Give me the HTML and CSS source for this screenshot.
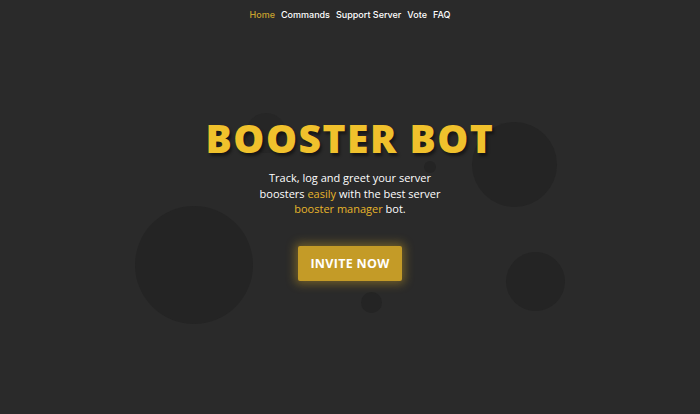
FILE: index.html
```html
<!DOCTYPE html>
<html lang="en">
<head>
<meta charset="utf-8">
<title>Booster Bot</title>
<link rel="stylesheet" href="styles.css">
</head>
<body>
<div class="page">
  <div class="bubbles" aria-hidden="true">
    <span class="bubble b1"></span>
    <span class="bubble b2"></span>
    <span class="bubble b3"></span>
    <span class="bubble b4"></span>
    <span class="bubble b5"></span>
    <span class="bubble b6"></span>
  </div>
  <nav class="nav">
    <a class="nav-link active" href="#">Home</a>
    <a class="nav-link" href="#">Commands</a>
    <a class="nav-link" href="#">Support Server</a>
    <a class="nav-link" href="#">Vote</a>
    <a class="nav-link" href="#">FAQ</a>
  </nav>
  <main class="hero">
    <h1 class="title">BOOSTER BOT</h1>
    <p class="tagline">Track, log and greet your server<br>boosters <span class="hl">easily</span> with the best server<br><span class="hl">booster manager</span> bot.</p>
    <a class="invite" href="#">INVITE NOW</a>
  </main>
</div>
</body>
</html>
```

FILE: styles.css
```css
html, body {
  margin: 0;
  padding: 0;
  background: #2a2a2a;
}
.page {
  position: relative;
  width: 700px;
  height: 414px;
  overflow: hidden;
  background: #2a2a2a;
  font-family: "Open Sans", "Liberation Sans", sans-serif;
}
.bubbles {
  position: absolute;
  inset: 0;
  z-index: 0;
}
.bubble {
  position: absolute;
  border-radius: 50%;
  background: #242424;
}
.b1 { left: 135px; top: 206px; width: 118px; height: 118px; }
.b2 { left: 472px; top: 122px; width: 85px; height: 85px; }
.b3 { left: 506px; top: 252px; width: 59px; height: 59px; }
.b4 { left: 361px; top: 292px; width: 21px; height: 21px; }
.b5 { left: 424px; top: 161px; width: 12px; height: 12px; }
.b6 { left: 246px; top: 113px; width: 40px; height: 40px; background: #262626; }

.nav {
  position: relative;
  z-index: 1;
  display: flex;
  justify-content: center;
  gap: 6px;
  padding-top: 9px;
  font-family: "Inter", "Liberation Sans", sans-serif;
  font-size: 9px;
  font-weight: 500;
}
.nav-link {
  color: #ffffff;
  text-decoration: none;
  line-height: 12px;
}
.nav-link.active {
  color: #c9a22e;
}
.hero {
  position: relative;
  z-index: 1;
  display: flex;
  flex-direction: column;
  align-items: center;
  padding-top: 97px;
}
.title {
  margin: 0;
  font-family: "Open Sans", "Liberation Sans", sans-serif;
  font-weight: 800;
  font-size: 39px;
  line-height: 40px;
  letter-spacing: 1.5px;
  color: #f0c12c;
  text-shadow: 2px 3px 3px rgba(0, 0, 0, 0.45);
}
.tagline {
  margin: 12px 0 0;
  text-align: center;
  color: #ffffff;
  font-size: 11px;
  font-weight: 500;
  line-height: 15.5px;
}
.hl {
  color: #e7b52a;
}
.invite {
  margin-top: 29px;
  width: 104px;
  height: 35px;
  display: flex;
  align-items: center;
  justify-content: center;
  box-sizing: border-box;
  background: #c49b27;
  border-radius: 2px;
  color: #ffffff;
  text-decoration: none;
  font-family: "Open Sans", "Liberation Sans", sans-serif;
  font-weight: 700;
  font-size: 12.5px;
  letter-spacing: 0.3px;
  box-shadow: 0 0 10px 3px rgba(196, 155, 39, 0.45);
}
```
